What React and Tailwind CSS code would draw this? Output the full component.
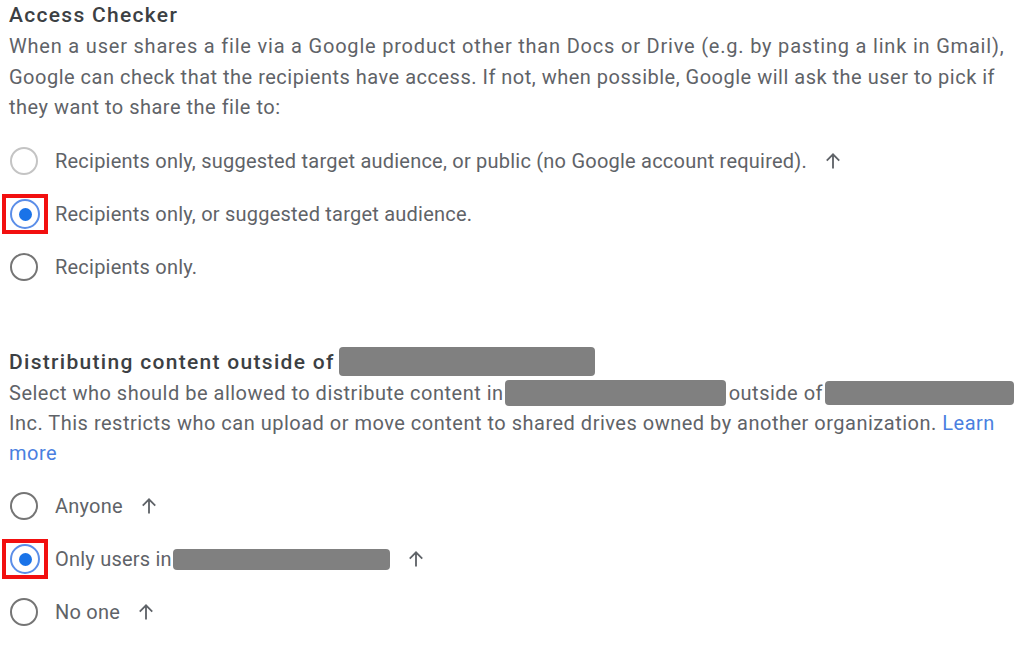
import React from "react";

function Arrow() {
  return (
    <svg width="20" height="20" viewBox="0 0 24 24" className="shrink-0">
      <path d="M12 21V4M4.5 11.5L12 4l7.5 7.5" fill="none" stroke="#5f6368" strokeWidth="2.2" />
    </svg>
  );
}

function Radio({ checked, light }) {
  if (checked) {
    return (
      <div className="w-[30px] h-[30px] rounded-full border-[2px] border-[#5b8ee8] flex items-center justify-center bg-white shrink-0">
        <div className="w-[13px] h-[13px] rounded-full bg-[#1a73e8]" />
      </div>
    );
  }
  return (
    <div
      className={`w-[28px] h-[28px] rounded-full border-2 ${light ? "border-[#c4c4c4]" : "border-[#757575]"} bg-white shrink-0`}
    />
  );
}

function Redact({ className }) {
  return <span className={`inline-block bg-[#808080] rounded-[4px] align-middle ${className}`} />;
}

function Row({ checked, light, children, boxed }) {
  return (
    <div className="flex items-center h-[53px]">
      <div className="w-[55px] flex items-center justify-start shrink-0">
        {boxed ? (
          <div className="ml-[2px] w-[46px] h-[40px] border-[4px] border-[#f20f0f] flex items-center justify-center overflow-hidden">
            <Radio checked={checked} light={light} />
          </div>
        ) : (
          <div className="ml-[10px]">
            <Radio checked={checked} light={light} />
          </div>
        )}
      </div>
      <div className="flex items-center gap-[16px] text-[20px] tracking-[0.22px] text-[#5f6368]">{children}</div>
    </div>
  );
}

export default function App() {
  return (
    <div
      className="w-[1024px] h-[649px] bg-white overflow-hidden"
      style={{ fontFamily: "Roboto, 'Liberation Sans', sans-serif" }}
    >
      <div className="pl-[9px]">
        <div className="text-[21px] font-medium tracking-[1.3px] text-[#3c4043] leading-[30px]">Access Checker</div>
        <p className="text-[20px] tracking-[0.5px] text-[#5f6368] leading-[30.5px] mt-[1px]">
          <span className="tracking-[0.8px]">
            When a user shares a file via a Google product other than Docs or Drive (e.g. by pasting a link in Gmail),
          </span>
          <br />
          Google can check that the recipients have access. If not, when possible, Google will ask the user to pick if
          <br />
          they want to share the file to:
        </p>
      </div>
      <div className="mt-[12px]">
        <Row light>
          <span>Recipients only, suggested target audience, or public (no Google account required).</span>
          <Arrow />
        </Row>
        <Row checked boxed>
          <span>Recipients only, or suggested target audience.</span>
        </Row>
        <Row>
          <span>Recipients only.</span>
        </Row>
      </div>
      <div className="pl-[9px] mt-[53px]">
        <div className="text-[21px] font-medium tracking-[1.3px] text-[#3c4043] leading-[30px] flex items-center">
          <span>Distributing content outside of</span>
          <Redact className="w-[256px] h-[29px] ml-[4px]" />
        </div>
        <div className="text-[20px] tracking-[0.5px] text-[#5f6368] leading-[30px] mt-[1px]">
          <div className="flex items-center">
            <span>Select who should be allowed to distribute content in</span>
            <Redact className="w-[221px] h-[26px] ml-[1px]" />
            <span className="ml-[3px]">outside of</span>
            <Redact className="w-[189px] h-[24px] ml-[2px]" />
          </div>
          <div>
            Inc. This restricts who can upload or move content to shared drives owned by another organization.{" "}
            <span className="text-[#4a7fe0]">Learn</span>
          </div>
          <div className="text-[#4a7fe0]">more</div>
        </div>
      </div>
      <div className="mt-[12px]">
        <Row>
          <span>Anyone</span>
          <Arrow />
        </Row>
        <Row checked boxed>
          <span className="flex items-center">
            Only users in
            <Redact className="w-[217px] h-[21px] ml-[1px]" />
          </span>
          <Arrow />
        </Row>
        <Row>
          <span>No one</span>
          <Arrow />
        </Row>
      </div>
    </div>
  );
}
